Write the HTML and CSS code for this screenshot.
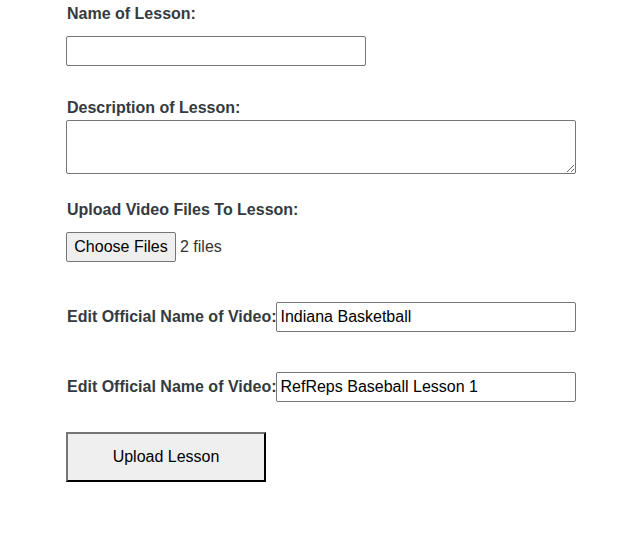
FILE: index.html
```html
<!DOCTYPE html>
<html>
<head>
<meta charset="utf-8">
<link rel="stylesheet" href="styles.css">
</head>
<body>
<form class="lesson-form">
  <label class="field-label">Name of Lesson:</label>
  <input class="text-input name-input" type="text">

  <label class="field-label desc-label">Description of Lesson:</label>
  <textarea class="desc-input"></textarea>

  <label class="field-label upload-label">Upload Video Files To Lesson:</label>
  <div class="file-row">
    <button type="button" class="file-button">Choose Files</button>
    <span class="file-count">2 files</span>
  </div>

  <div class="video-row">
    <label class="inline-label">Edit Official Name of Video:</label><input class="text-input video-input" type="text" value="Indiana Basketball">
  </div>
  <div class="video-row">
    <label class="inline-label">Edit Official Name of Video:</label><input class="text-input video-input" type="text" value="RefReps Baseball Lesson 1">
  </div>

  <button type="button" class="submit-button">Upload Lesson</button>
</form>
</body>
</html>
```
FILE: styles.css
```css
* { box-sizing: border-box; }
body {
  margin: 0;
  background: #fff;
  font-family: "Liberation Sans", Arial, sans-serif;
}
.lesson-form {
  padding: 5px 0 0 66px;
  display: flex;
  flex-direction: column;
  align-items: flex-start;
}
.field-label, .inline-label {
  font-size: 16px;
  font-weight: bold;
  line-height: 18px;
  color: #343a40;
  padding-left: 1px;
}
.text-input {
  height: 30px;
  border: 1px solid #767676;
  border-radius: 2px;
  font-family: "Liberation Sans", Arial, sans-serif;
  font-size: 16px;
  color: #000;
  padding: 1px 4px;
  margin: 0;
}
.name-input { width: 300px; margin-top: 13px; }
.desc-label { margin-top: 33px; }
.desc-input {
  margin-top: 3px;
  width: 510px;
  height: 54px;
  border: 1px solid #767676;
  border-radius: 2px;
  resize: vertical;
  font-family: "Liberation Sans", Arial, sans-serif;
  font-size: 16px;
}
.upload-label { margin-top: 27px; }
.file-row {
  margin-top: 13px;
  display: flex;
  align-items: center;
  gap: 4px;
}
.file-button {
  width: 110px;
  height: 30px;
  border: 1px solid #767676;
  border-radius: 2px;
  background: #efefef;
  font-family: "Liberation Sans", Arial, sans-serif;
  font-size: 16px;
  color: #000;
  padding: 0;
}
.file-count {
  font-size: 16px;
  color: #333;
}
.video-row {
  margin-top: 40px;
  display: flex;
  align-items: center;
}
.inline-label { margin-right: -1px; }
.video-input { width: 300px; }
.submit-button {
  margin-top: 30px;
  width: 200px;
  height: 50px;
  border: 2px solid;
  border-color: #767676 #000 #000 #767676;
  background: #efefef;
  font-family: "Liberation Sans", Arial, sans-serif;
  font-size: 16px;
  color: #000;
}
```
